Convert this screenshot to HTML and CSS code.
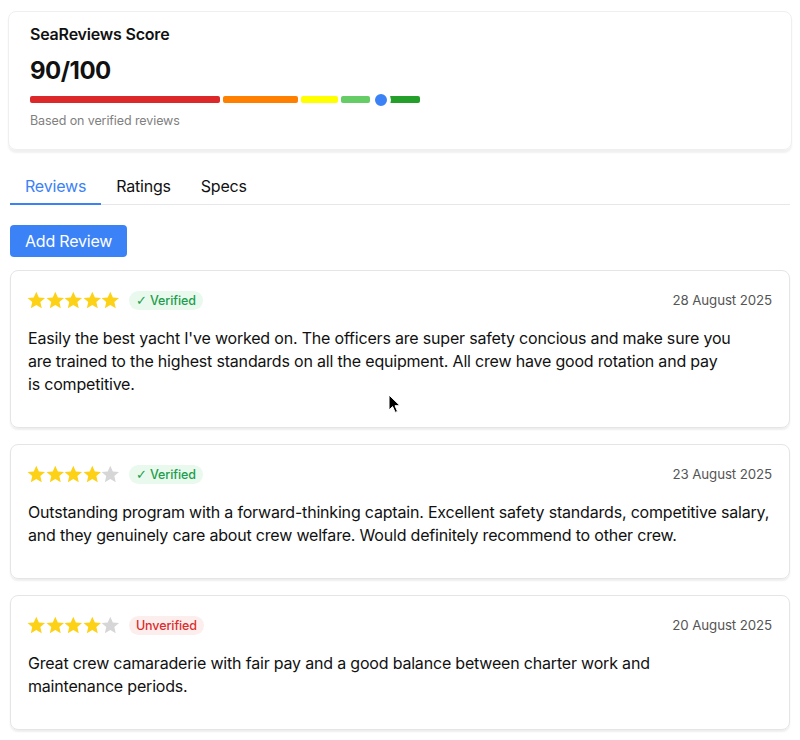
FILE: index.html
```html
<!DOCTYPE html>
<html lang="en">
<head>
	<meta charset="UTF-8">
	<title>SeaReviews</title>
	<link rel="stylesheet" href="styles.css">
</head>
<body>
	<div class="page">
		<div class="scorecard">
			<h3 class="score-title">SeaReviews Score</h3>
			<div class="score-num">90/100</div>
			<div class="scorebar">
				<span class="seg red"></span>
				<span class="seg orange"></span>
				<span class="seg yellow"></span>
				<span class="seg lgreen"></span>
				<span class="seg dgreen"></span>
				<span class="marker" style="left: 90%"></span>
			</div>
			<div class="score-note">Based on verified reviews</div>
		</div>

		<ul class="tabs">
			<li class="on">Reviews</li>
			<li>Ratings</li>
			<li>Specs</li>
		</ul>

		<button class="addbtn">Add Review</button>

		<div class="review">
			<div class="review-head">
				<div class="stars">
					<svg viewBox="0 0 20 20" class="star"><path d="M10 .8l2.75 6.1 6.65.6-5.05 4.45 1.5 6.55L10 15.05 4.15 18.5l1.5-6.55L.6 7.5l6.65-.6z"/></svg>
					<svg viewBox="0 0 20 20" class="star"><path d="M10 .8l2.75 6.1 6.65.6-5.05 4.45 1.5 6.55L10 15.05 4.15 18.5l1.5-6.55L.6 7.5l6.65-.6z"/></svg>
					<svg viewBox="0 0 20 20" class="star"><path d="M10 .8l2.75 6.1 6.65.6-5.05 4.45 1.5 6.55L10 15.05 4.15 18.5l1.5-6.55L.6 7.5l6.65-.6z"/></svg>
					<svg viewBox="0 0 20 20" class="star"><path d="M10 .8l2.75 6.1 6.65.6-5.05 4.45 1.5 6.55L10 15.05 4.15 18.5l1.5-6.55L.6 7.5l6.65-.6z"/></svg>
					<svg viewBox="0 0 20 20" class="star"><path d="M10 .8l2.75 6.1 6.65.6-5.05 4.45 1.5 6.55L10 15.05 4.15 18.5l1.5-6.55L.6 7.5l6.65-.6z"/></svg>
				</div>
				<span class="badge verified"><b class="check">&#10003;</b> Verified</span>
				<span class="date">28 August 2025</span>
			</div>
			<p class="review-text">Easily the best yacht I've worked on. The officers are super safety concious and make sure you are trained to the highest standards on all the equipment. All crew have good rotation and pay is competitive.</p>
		</div>

		<div class="review">
			<div class="review-head">
				<div class="stars">
					<svg viewBox="0 0 20 20" class="star"><path d="M10 .8l2.75 6.1 6.65.6-5.05 4.45 1.5 6.55L10 15.05 4.15 18.5l1.5-6.55L.6 7.5l6.65-.6z"/></svg>
					<svg viewBox="0 0 20 20" class="star"><path d="M10 .8l2.75 6.1 6.65.6-5.05 4.45 1.5 6.55L10 15.05 4.15 18.5l1.5-6.55L.6 7.5l6.65-.6z"/></svg>
					<svg viewBox="0 0 20 20" class="star"><path d="M10 .8l2.75 6.1 6.65.6-5.05 4.45 1.5 6.55L10 15.05 4.15 18.5l1.5-6.55L.6 7.5l6.65-.6z"/></svg>
					<svg viewBox="0 0 20 20" class="star"><path d="M10 .8l2.75 6.1 6.65.6-5.05 4.45 1.5 6.55L10 15.05 4.15 18.5l1.5-6.55L.6 7.5l6.65-.6z"/></svg>
					<svg viewBox="0 0 20 20" class="star off"><path d="M10 .8l2.75 6.1 6.65.6-5.05 4.45 1.5 6.55L10 15.05 4.15 18.5l1.5-6.55L.6 7.5l6.65-.6z"/></svg>
				</div>
				<span class="badge verified"><b class="check">&#10003;</b> Verified</span>
				<span class="date">23 August 2025</span>
			</div>
			<p class="review-text">Outstanding program with a forward-thinking captain. Excellent safety standards, competitive salary, and they genuinely care about crew welfare. Would definitely recommend to other crew.</p>
		</div>

		<div class="review">
			<div class="review-head">
				<div class="stars">
					<svg viewBox="0 0 20 20" class="star"><path d="M10 .8l2.75 6.1 6.65.6-5.05 4.45 1.5 6.55L10 15.05 4.15 18.5l1.5-6.55L.6 7.5l6.65-.6z"/></svg>
					<svg viewBox="0 0 20 20" class="star"><path d="M10 .8l2.75 6.1 6.65.6-5.05 4.45 1.5 6.55L10 15.05 4.15 18.5l1.5-6.55L.6 7.5l6.65-.6z"/></svg>
					<svg viewBox="0 0 20 20" class="star"><path d="M10 .8l2.75 6.1 6.65.6-5.05 4.45 1.5 6.55L10 15.05 4.15 18.5l1.5-6.55L.6 7.5l6.65-.6z"/></svg>
					<svg viewBox="0 0 20 20" class="star"><path d="M10 .8l2.75 6.1 6.65.6-5.05 4.45 1.5 6.55L10 15.05 4.15 18.5l1.5-6.55L.6 7.5l6.65-.6z"/></svg>
					<svg viewBox="0 0 20 20" class="star off"><path d="M10 .8l2.75 6.1 6.65.6-5.05 4.45 1.5 6.55L10 15.05 4.15 18.5l1.5-6.55L.6 7.5l6.65-.6z"/></svg>
				</div>
				<span class="badge unverified">Unverified</span>
				<span class="date">20 August 2025</span>
			</div>
			<p class="review-text">Great crew camaraderie with fair pay and a good balance between charter work and maintenance periods.</p>
		</div>
	</div>

	<svg class="cursor" width="14" height="20" viewBox="0 0 14 20"><path d="M1 1v15l3.6-3.4 2.6 5.8 2.3-1-2.5-5.7H12z" fill="#000" stroke="#fff" stroke-width="1"/></svg>
</body>
</html>
```

FILE: styles.css
```css
body{
	margin: 0;
	font-family: Inter, "Noto Sans", sans-serif;
	color: #111;
	background-color: #fff;
	letter-spacing: -0.2px;
}
.page{
	padding: 11px 10px 20px;
}
.scorecard{
	margin: 0 -2px;
	padding: 10px 21px 19px;
	border: 1px solid #efefef;
	border-radius: 8px;
	box-shadow: 0 3px 2px rgba(0, 0, 0, 0.06);
}
.score-title{
	margin: 0;
	font-size: 16px;
	line-height: 24px;
	font-weight: 600;
}
.score-num{
	margin-top: 9px;
	font-size: 24px;
	line-height: 32px;
	font-weight: 700;
	letter-spacing: -0.5px;
}
.scorebar{
	position: relative;
	display: flex;
	gap: 3px;
	width: 390px;
	height: 7px;
	margin-top: 9px;
}
.seg{
	display: block;
	height: 7px;
	border-radius: 2px;
}
.red{ width: 190px; background-color: #dc2828; }
.orange{ width: 75px; background-color: #ff7f00; }
.yellow{ width: 37px; background-color: #ffff00; }
.lgreen{ width: 29px; background-color: #66cc66; }
.dgreen{ width: 47px; background-color: #24a02a; }
.marker{
	position: absolute;
	top: 50%;
	width: 12px;
	height: 12px;
	border-radius: 50%;
	background-color: #3b82f6;
	border: 4px solid #fff;
	transform: translate(-50%, -50%);
}
.score-note{
	margin-top: 9px;
	font-size: 12.5px;
	line-height: 18px;
	color: #808080;
	letter-spacing: -0.1px;
}
.tabs{
	display: flex;
	margin: 18px 0 0;
	padding: 0;
	list-style: none;
	border-bottom: 1px solid #e5e7eb;
}
.tabs li{
	padding: 6px 15px 5px;
	font-size: 16px;
	line-height: 24px;
	color: #111;
	border-bottom: 2px solid transparent;
	margin-bottom: -1px;
	cursor: pointer;
}
.tabs li.on{
	color: #3b82f6;
	border-bottom-color: #3b82f6;
}
.addbtn{
	display: block;
	margin-top: 20px;
	height: 32px;
	padding: 0 15px;
	border: none;
	border-radius: 4px;
	background-color: #3b82f6;
	color: #fff;
	font-family: inherit;
	font-size: 16px;
	letter-spacing: -0.2px;
	cursor: pointer;
}
.review{
	margin-top: 13px;
	padding: 17px 17px 15px;
	border: 1px solid #e5e5e5;
	border-radius: 8px;
	box-shadow: 0 2px 2px rgba(0, 0, 0, 0.07);
}
.review + .review{
	margin-top: 16px;
}
.review-head{
	display: flex;
	align-items: center;
	height: 24px;
}
.stars{
	display: flex;
	margin-left: -1px;
}
.star{
	width: 18.6px;
	height: 18.6px;
	fill: #fcd116;
}
.star.off{
	fill: #d6d6d6;
}
.badge{
	margin-left: 9px;
	padding: 0 7px;
	font-size: 12.5px;
	line-height: 19px;
	border-radius: 10px;
	font-weight: 500;
	letter-spacing: -0.1px;
}
.check{
	font-family: "DejaVu Sans", sans-serif;
	font-weight: 700;
	font-size: 13px;
}
.verified{
	background-color: #e9f9ee;
	color: #1f9d4c;
}
.unverified{
	background-color: #fdeeee;
	color: #d92d2d;
}
.date{
	margin-left: auto;
	font-size: 13.3px;
	color: #555;
	letter-spacing: -0.1px;
}
.review-text{
	margin: 15px 0 16px;
	font-size: 16px;
	line-height: 23px;
	letter-spacing: -0.19px;
	text-wrap: pretty;
}
.cursor{
	position: absolute;
	left: 388px;
	top: 394px;
}
```
